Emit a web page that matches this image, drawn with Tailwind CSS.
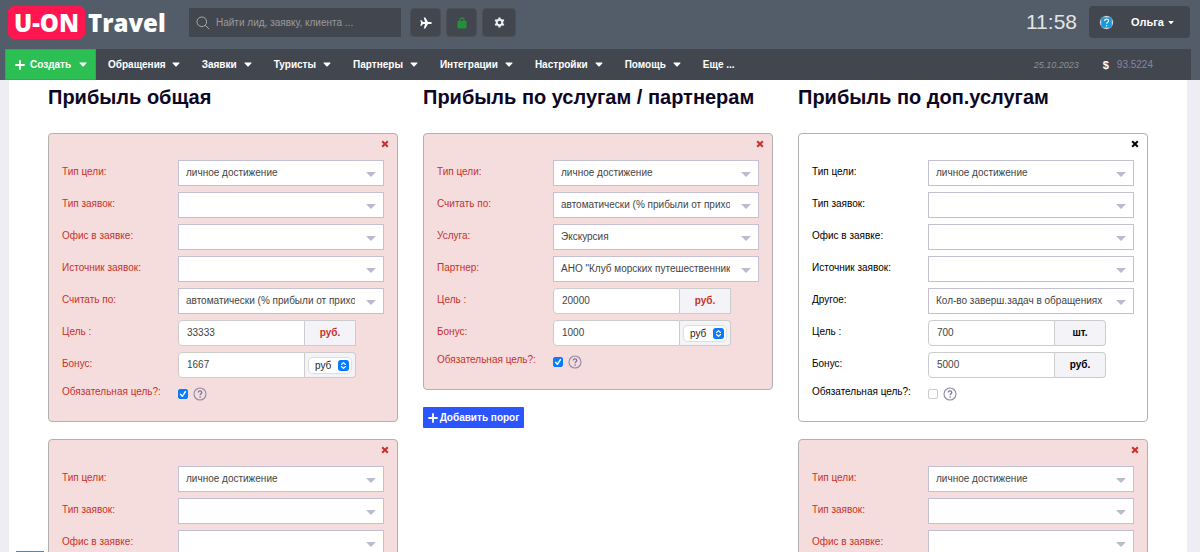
<!DOCTYPE html>
<html lang="ru">
<head>
<meta charset="utf-8">
<meta name="viewport" content="width=device-width, initial-scale=1">
<title>U-ON Travel</title>
<script src="https://cdn.jsdelivr.net/npm/@tailwindcss/browser@4"></script>
</head>
<body class="relative flex h-screen flex-col overflow-hidden bg-[#ededf3] font-['Liberation_Sans',Arial,sans-serif] text-[10px] leading-4 text-black">
<svg class="hidden" aria-hidden="true">
  <symbol id="caret" viewBox="0 0 8 5"><path d="M.9.5h6.2c.4 0 .6.4.3.7L4.4 4.4a.6.6 0 0 1-.8 0L.6 1.2C.3.9.5.5.9.5z" fill="currentColor"/></symbol>
  <symbol id="tri" viewBox="0 0 10 5"><path d="M0 0h10L5 5z" fill="#bdbacd"/></symbol>
  <symbol id="plus" viewBox="0 0 10 10"><path d="M5 1v8M1 5h8" stroke="currentColor" stroke-width="1.8" stroke-linecap="round"/></symbol>
  <symbol id="cross" viewBox="0 0 8 8"><path d="M1.2 1.2l5.6 5.6M6.8 1.2L1.2 6.8" stroke="currentColor" stroke-width="2"/></symbol>
  <symbol id="help" viewBox="0 0 14 14"><circle cx="7" cy="7" r="6" fill="none" stroke="#8f88ab" stroke-width="1.1"/><path d="M5.2 5.6c0-2.3 3.6-2.3 3.6 0 0 1.2-1.7 1.3-1.7 2.6" fill="none" stroke="#7d7799" stroke-width="1.3"/><circle cx="7.1" cy="10.1" r=".8" fill="#7d7799"/></symbol>
  <symbol id="updown" viewBox="0 0 10 10"><rect width="10" height="10" rx="2.4" fill="#0a7aff"/><path d="M3.2 4.1L5 2.4l1.8 1.7M3.2 5.9L5 7.6l1.8-1.7" fill="none" stroke="#fff" stroke-width="1" stroke-linecap="round" stroke-linejoin="round"/></symbol>
  <symbol id="tick" viewBox="0 0 10 10"><path d="M2.5 5.3l1.8 2 3.2-4.8" fill="none" stroke="#fff" stroke-width="1.4" stroke-linecap="round" stroke-linejoin="round"/></symbol>
</svg>

<header class="shrink-0 bg-[#525d69] text-white">
  <div class="flex h-[49px] items-start pr-[10px] pl-2">
    <a href="#" class="mt-[6px] flex w-[181px] items-center gap-[3px] font-['Open_Sans',sans-serif] text-[24px] leading-8 font-extrabold">
      <span class="flex h-[33px] w-[77px] items-center justify-center rounded-md bg-[#ff1650]">U-ON</span><span>Travel</span>
    </a>
    <label class="mt-2 flex h-[29px] w-[212px] items-center gap-[6px] bg-[#42474f] pl-[7px]">
      <svg class="size-[14px] shrink-0" viewBox="0 0 14 14" fill="none" stroke="#a5a8ac" stroke-width="1"><circle cx="5.8" cy="5.8" r="4.8"/><path d="M9.2 9.2l4 4"/></svg>
      <input type="text" aria-label="Поиск" placeholder="Найти лид, заявку, клиента ..." class="w-full min-w-0 bg-transparent text-[10px] outline-none placeholder:text-[#9a9a9c]">
    </label>
    <div class="mt-2 ml-[9px] flex gap-[5px]">
      <button aria-label="Авиабилеты" class="grid h-[29px] w-[31px] place-items-center rounded-sm border border-[#4d4f52] bg-[#42474f]"><svg class="size-3" viewBox="0 0 12 12" fill="#fff"><path d="M.3 3.2h1.3L3 4.9h2L3.8.6h1.5L8 4.900h2.100c1 0 1.800.6 1.800 1.100S11.100 7.100 10.100 7.100H8l-2.700 4.300H3.800L5 7.100H3L1.600 8.800H.3L1.100 6z"/></svg></button>
      <button aria-label="Покупки" class="grid h-[29px] w-[31px] place-items-center rounded-sm border border-[#4d4f52] bg-[#42474f]"><svg class="h-3 w-[10px]" viewBox="0 0 10 12"><path d="M.5 4h9v6.200A1.300 1.300 0 0 1 8.200 11.500H1.800A1.300 1.300 0 0 1 .5 10.200z" fill="#23903c"/><path d="M3 5.500V3a2 2 0 0 1 4 0v2.500" fill="none" stroke="#23903c" stroke-width="1.300"/></svg></button>
      <button aria-label="Параметры" class="grid h-[29px] w-[34px] place-items-center rounded-sm border border-[#4d4f52] bg-[#42474f]"><svg class="size-[11px]" viewBox="0 0 12 12" fill="none" stroke="#eceef0"><circle cx="6" cy="6" r="3" stroke-width="2"/><path d="M6 .6v2M6 9.400v2M1.300 3.300l1.800 1M8.900 7.700l1.800 1M1.300 8.700l1.800-1M8.900 4.300l1.800-1" stroke-width="2.400"/></svg></button>
    </div>
    <div class="mt-[6px] ml-auto text-[21px] leading-8 text-[#e4e4e4]">11:58</div>
    <div class="mt-[6px] ml-3 flex h-8 w-[101px] items-center gap-[17px] rounded-sm bg-[#42474f] pl-[10px]">
      <a href="#" aria-label="Справка"><svg class="size-[15px]" viewBox="0 0 15 15"><circle cx="7.500" cy="7.500" r="7" fill="#d5e6f0" stroke="#33383e" stroke-width=".8"/><rect x="2.200" y="2.200" width="10.600" height="10.600" rx="1.500" fill="#1c97d8"/><path d="M5.600 6c0-2.700 3.900-2.500 3.900-.1 0 1.300-1.900 1.300-1.900 2.800" fill="none" stroke="#fff" stroke-width="1.100"/><circle cx="7.600" cy="10.700" r=".7" fill="#fff"/></svg></a>
      <button class="flex items-center gap-1 text-[11px] font-bold">Ольга <svg class="h-[5px] w-[6px]"><use href="#caret"/></svg></button>
    </div>
  </div>
  <nav class="mr-[9px] ml-[5px] flex h-[31px] items-center bg-[#42474f] font-bold">
    <button class="flex h-full w-[91px] items-center border border-[#22b14c] bg-[#2bbf54] pl-[9px]"><svg class="mr-[5px] size-[10px]"><use href="#plus"/></svg>Создать<svg class="ml-2 h-[5px] w-2"><use href="#caret"/></svg></button>
    <div class="ml-3 flex items-center gap-[22px]">
      <button class="flex items-center gap-[6px]">Обращения<svg class="h-[5px] w-2"><use href="#caret"/></svg></button>
      <button class="flex items-center gap-[7px]">Заявки<svg class="h-[5px] w-2"><use href="#caret"/></svg></button>
      <button class="flex items-center gap-[7px]">Туристы<svg class="h-[5px] w-2"><use href="#caret"/></svg></button>
      <button class="flex items-center gap-[7px]">Партнеры<svg class="h-[5px] w-2"><use href="#caret"/></svg></button>
      <button class="flex items-center gap-[7px]">Интеграции<svg class="h-[5px] w-2"><use href="#caret"/></svg></button>
      <button class="flex items-center gap-[7px]">Настройки<svg class="h-[5px] w-2"><use href="#caret"/></svg></button>
      <button class="flex items-center gap-[7px]">Помощь<svg class="h-[5px] w-2"><use href="#caret"/></svg></button>
      <button>Еще ...</button>
    </div>
    <div class="ml-auto flex items-center pr-[38px] text-[9px] font-normal">
      <span class="mr-6 text-[#8f8f92] italic">25.10.2023</span>
      <span class="mr-2 text-[11px] font-bold">$</span>
      <span class="text-[10px] text-[#8b84a0]">93.5224</span>
    </div>
  </nav>
</header>

<main class="mr-[13px] ml-[9px] grid min-h-0 flex-1 grid-cols-3 content-start gap-x-[25px] bg-white px-[39px]">

  <section>
    <h2 class="mt-[3px] mb-[22px] text-[20px] leading-7 font-bold whitespace-nowrap text-[#0d0725]">Прибыль общая</h2>
    <div class="flex flex-col gap-[17px]">
      <form class="rounded-sm border border-[#b3b0b0] bg-[#f5dddd] px-[13px] pb-[17px] text-[#c9302c]">
        <div class="-mr-[5px] flex h-[26px] items-start justify-end pt-[6px]"><button type="button" aria-label="Удалить"><svg class="size-2"><use href="#cross"/></svg></button></div>
        <div class="grid grid-cols-[116px_1fr] gap-y-[6px]">
          <label for="a1" class="pt-1">Тип цели:</label>
          <div class="relative"><select id="a1" class="block h-[26px] w-full appearance-none border border-[#c3c0d3] bg-white pr-7 pl-[7px] text-[#444]"><option>личное достижение</option></select><svg class="pointer-events-none absolute top-3 right-2 h-[5px] w-[10px]"><use href="#tri"/></svg></div>
          <label for="a2" class="pt-1">Тип заявок:</label>
          <div class="relative"><select id="a2" class="block h-[26px] w-full appearance-none border border-[#c3c0d3] bg-white pr-7 pl-[7px] text-[#444]"><option></option></select><svg class="pointer-events-none absolute top-3 right-2 h-[5px] w-[10px]"><use href="#tri"/></svg></div>
          <label for="a3" class="pt-1">Офис в заявке:</label>
          <div class="relative"><select id="a3" class="block h-[26px] w-full appearance-none border border-[#c3c0d3] bg-white pr-7 pl-[7px] text-[#444]"><option></option></select><svg class="pointer-events-none absolute top-3 right-2 h-[5px] w-[10px]"><use href="#tri"/></svg></div>
          <label for="a4" class="pt-1">Источник заявок:</label>
          <div class="relative"><select id="a4" class="block h-[26px] w-full appearance-none border border-[#c3c0d3] bg-white pr-7 pl-[7px] text-[#444]"><option></option></select><svg class="pointer-events-none absolute top-3 right-2 h-[5px] w-[10px]"><use href="#tri"/></svg></div>
          <label for="a5" class="pt-1">Считать по:</label>
          <div class="relative"><select id="a5" class="block h-[26px] w-full appearance-none border border-[#c3c0d3] bg-white pr-7 pl-[7px] text-[#444]"><option>автоматически (% прибыли от прихода)</option></select><svg class="pointer-events-none absolute top-3 right-2 h-[5px] w-[10px]"><use href="#tri"/></svg></div>
          <label for="a6" class="pt-1">Цель :</label>
          <div class="flex h-[26px]"><input id="a6" type="text" value="33333" class="w-[127px] rounded-l-sm border border-[#ccc] bg-white px-2 text-[#444]"><span class="grid w-[51px] place-items-center border border-l-0 border-[#ccc] bg-[#f4f4f8] font-bold">руб.</span></div>
          <label for="a7" class="pt-1">Бонус:</label>
          <div class="flex h-[26px]"><input id="a7" type="text" value="1667" class="w-[127px] rounded-l-sm border border-[#ccc] bg-white px-2 text-[#444]"><span class="grid w-[51px] place-items-center rounded-r-sm border border-l-0 border-[#ccc] bg-[#f4f4f8]"><span class="relative"><select aria-label="Валюта бонуса" class="block h-[15px] w-[42px] appearance-none rounded-[4px] bg-white pl-[6px] text-[10px] leading-[15px] text-[#222] shadow-[0_0_1px_1px_#00000018]"><option>руб</option></select><svg class="pointer-events-none absolute top-[2px] right-[2px] size-[11px]"><use href="#updown"/></svg></span></span></div>
        </div>
        <div class="grid grid-cols-[116px_1fr] pt-[6px]">
          <label for="a8">Обязательная цель?:</label>
          <div class="flex h-5 items-center gap-[5px]"><span class="relative size-[10px]"><input id="a8" type="checkbox" checked class="block size-[10px] appearance-none rounded-[2px] border border-[#ccc] bg-white checked:border-[#0a7aff] checked:bg-[#0a7aff]"><svg class="pointer-events-none absolute inset-0 size-[10px]"><use href="#tick"/></svg></span><button type="button" aria-label="Подсказка"><svg class="size-[14px]"><use href="#help"/></svg></button></div>
        </div>
      </form>
      <form class="rounded-sm border border-[#b3b0b0] bg-[#f5dddd] px-[13px] pb-[17px] text-[#c9302c]">
        <div class="-mr-[5px] flex h-[26px] items-start justify-end pt-[6px]"><button type="button" aria-label="Удалить"><svg class="size-2"><use href="#cross"/></svg></button></div>
        <div class="grid grid-cols-[116px_1fr] gap-y-[6px]">
          <label for="b1" class="pt-1">Тип цели:</label>
          <div class="relative"><select id="b1" class="block h-[26px] w-full appearance-none border border-[#c3c0d3] bg-white pr-7 pl-[7px] text-[#444]"><option>личное достижение</option></select><svg class="pointer-events-none absolute top-3 right-2 h-[5px] w-[10px]"><use href="#tri"/></svg></div>
          <label for="b2" class="pt-1">Тип заявок:</label>
          <div class="relative"><select id="b2" class="block h-[26px] w-full appearance-none border border-[#c3c0d3] bg-white pr-7 pl-[7px] text-[#444]"><option></option></select><svg class="pointer-events-none absolute top-3 right-2 h-[5px] w-[10px]"><use href="#tri"/></svg></div>
          <label for="b3" class="pt-1">Офис в заявке:</label>
          <div class="relative"><select id="b3" class="block h-[26px] w-full appearance-none border border-[#c3c0d3] bg-white pr-7 pl-[7px] text-[#444]"><option></option></select><svg class="pointer-events-none absolute top-3 right-2 h-[5px] w-[10px]"><use href="#tri"/></svg></div>
        </div>
      </form>
    </div>
  </section>

  <section>
    <h2 class="mt-[3px] mb-[22px] text-[20px] leading-7 font-bold whitespace-nowrap text-[#0d0725]">Прибыль по услугам / партнерам</h2>
    <div class="flex flex-col items-stretch gap-[17px]">
      <form class="rounded-sm border border-[#b3b0b0] bg-[#f5dddd] px-[13px] pb-[17px] text-[#c9302c]">
        <div class="-mr-[5px] flex h-[26px] items-start justify-end pt-[6px]"><button type="button" aria-label="Удалить"><svg class="size-2"><use href="#cross"/></svg></button></div>
        <div class="grid grid-cols-[116px_1fr] gap-y-[6px]">
          <label for="c1" class="pt-1">Тип цели:</label>
          <div class="relative"><select id="c1" class="block h-[26px] w-full appearance-none border border-[#c3c0d3] bg-white pr-7 pl-[7px] text-[#444]"><option>личное достижение</option></select><svg class="pointer-events-none absolute top-3 right-2 h-[5px] w-[10px]"><use href="#tri"/></svg></div>
          <label for="c2" class="pt-1">Считать по:</label>
          <div class="relative"><select id="c2" class="block h-[26px] w-full appearance-none border border-[#c3c0d3] bg-white pr-7 pl-[7px] text-[#444]"><option>автоматически (% прибыли от прихода)</option></select><svg class="pointer-events-none absolute top-3 right-2 h-[5px] w-[10px]"><use href="#tri"/></svg></div>
          <label for="c3" class="pt-1">Услуга:</label>
          <div class="relative"><select id="c3" class="block h-[26px] w-full appearance-none border border-[#c3c0d3] bg-white pr-7 pl-[7px] text-[#444]"><option>Экскурсия</option></select><svg class="pointer-events-none absolute top-3 right-2 h-[5px] w-[10px]"><use href="#tri"/></svg></div>
          <label for="c4" class="pt-1">Партнер:</label>
          <div class="relative"><select id="c4" class="block h-[26px] w-full appearance-none border border-[#c3c0d3] bg-white pr-7 pl-[7px] text-[#444]"><option>АНО "Клуб морских путешественников"</option></select><svg class="pointer-events-none absolute top-3 right-2 h-[5px] w-[10px]"><use href="#tri"/></svg></div>
          <label for="c5" class="pt-1">Цель :</label>
          <div class="flex h-[26px]"><input id="c5" type="text" value="20000" class="w-[127px] rounded-l-sm border border-[#ccc] bg-white px-2 text-[#444]"><span class="grid w-[51px] place-items-center border border-l-0 border-[#ccc] bg-[#f4f4f8] font-bold">руб.</span></div>
          <label for="c6" class="pt-1">Бонус:</label>
          <div class="flex h-[26px]"><input id="c6" type="text" value="1000" class="w-[127px] rounded-l-sm border border-[#ccc] bg-white px-2 text-[#444]"><span class="grid w-[51px] place-items-center rounded-r-sm border border-l-0 border-[#ccc] bg-[#f4f4f8]"><span class="relative"><select aria-label="Валюта бонуса" class="block h-[15px] w-[42px] appearance-none rounded-[4px] bg-white pl-[6px] text-[10px] leading-[15px] text-[#222] shadow-[0_0_1px_1px_#00000018]"><option>руб</option></select><svg class="pointer-events-none absolute top-[2px] right-[2px] size-[11px]"><use href="#updown"/></svg></span></span></div>
        </div>
        <div class="grid grid-cols-[116px_1fr] pt-[6px]">
          <label for="c7">Обязательная цель?:</label>
          <div class="flex h-5 items-center gap-[5px]"><span class="relative size-[10px]"><input id="c7" type="checkbox" checked class="block size-[10px] appearance-none rounded-[2px] border border-[#ccc] bg-white checked:border-[#0a7aff] checked:bg-[#0a7aff]"><svg class="pointer-events-none absolute inset-0 size-[10px]"><use href="#tick"/></svg></span><button type="button" aria-label="Подсказка"><svg class="size-[14px]"><use href="#help"/></svg></button></div>
        </div>
      </form>
      <button class="flex h-[21px] w-[101px] items-center justify-center gap-[2px] self-start rounded-[1px] bg-[#2a55ff] font-bold whitespace-nowrap text-white"><svg class="size-[10px] shrink-0"><use href="#plus"/></svg>Добавить порог</button>
    </div>
  </section>

  <section>
    <h2 class="mt-[3px] mb-[22px] text-[20px] leading-7 font-bold whitespace-nowrap text-[#0d0725]">Прибыль по доп.услугам</h2>
    <div class="flex flex-col gap-[17px]">
      <form class="rounded-sm border border-[#b3b0b0] bg-white px-[13px] pb-[17px] text-black">
        <div class="-mr-[5px] flex h-[26px] items-start justify-end pt-[6px]"><button type="button" aria-label="Удалить"><svg class="size-2"><use href="#cross"/></svg></button></div>
        <div class="grid grid-cols-[116px_1fr] gap-y-[6px]">
          <label for="d1" class="pt-1">Тип цели:</label>
          <div class="relative"><select id="d1" class="block h-[26px] w-full appearance-none border border-[#c3c0d3] bg-white pr-7 pl-[7px] text-[#444]"><option>личное достижение</option></select><svg class="pointer-events-none absolute top-3 right-2 h-[5px] w-[10px]"><use href="#tri"/></svg></div>
          <label for="d2" class="pt-1">Тип заявок:</label>
          <div class="relative"><select id="d2" class="block h-[26px] w-full appearance-none border border-[#c3c0d3] bg-white pr-7 pl-[7px] text-[#444]"><option></option></select><svg class="pointer-events-none absolute top-3 right-2 h-[5px] w-[10px]"><use href="#tri"/></svg></div>
          <label for="d3" class="pt-1">Офис в заявке:</label>
          <div class="relative"><select id="d3" class="block h-[26px] w-full appearance-none border border-[#c3c0d3] bg-white pr-7 pl-[7px] text-[#444]"><option></option></select><svg class="pointer-events-none absolute top-3 right-2 h-[5px] w-[10px]"><use href="#tri"/></svg></div>
          <label for="d4" class="pt-1">Источник заявок:</label>
          <div class="relative"><select id="d4" class="block h-[26px] w-full appearance-none border border-[#c3c0d3] bg-white pr-7 pl-[7px] text-[#444]"><option></option></select><svg class="pointer-events-none absolute top-3 right-2 h-[5px] w-[10px]"><use href="#tri"/></svg></div>
          <label for="d5" class="pt-1">Другое:</label>
          <div class="relative"><select id="d5" class="block h-[26px] w-full appearance-none border border-[#c3c0d3] bg-white pr-7 pl-[7px] text-[#444]"><option>Кол-во заверш.задач в обращениях</option></select><svg class="pointer-events-none absolute top-3 right-2 h-[5px] w-[10px]"><use href="#tri"/></svg></div>
          <label for="d6" class="pt-1">Цель :</label>
          <div class="flex h-[26px]"><input id="d6" type="text" value="700" class="w-[127px] rounded-l-sm border border-[#ccc] bg-white px-2 text-[#444]"><span class="grid w-[51px] place-items-center rounded-r-sm border border-l-0 border-[#ccc] bg-[#f4f4f8] font-bold">шт.</span></div>
          <label for="d7" class="pt-1">Бонус:</label>
          <div class="flex h-[26px]"><input id="d7" type="text" value="5000" class="w-[127px] rounded-l-sm border border-[#ccc] bg-white px-2 text-[#444]"><span class="grid w-[51px] place-items-center rounded-r-sm border border-l-0 border-[#ccc] bg-[#f4f4f8] font-bold">руб.</span></div>
        </div>
        <div class="grid grid-cols-[116px_1fr] pt-[6px]">
          <label for="d8">Обязательная цель?:</label>
          <div class="flex h-5 items-center gap-[5px]"><input id="d8" type="checkbox" class="block size-[10px] appearance-none rounded-[2px] border border-[#ccc] bg-white"><button type="button" aria-label="Подсказка"><svg class="size-[14px]"><use href="#help"/></svg></button></div>
        </div>
      </form>
      <form class="rounded-sm border border-[#b3b0b0] bg-[#f5dddd] px-[13px] pb-[17px] text-[#c9302c]">
        <div class="-mr-[5px] flex h-[26px] items-start justify-end pt-[6px]"><button type="button" aria-label="Удалить"><svg class="size-2"><use href="#cross"/></svg></button></div>
        <div class="grid grid-cols-[116px_1fr] gap-y-[6px]">
          <label for="e1" class="pt-1">Тип цели:</label>
          <div class="relative"><select id="e1" class="block h-[26px] w-full appearance-none border border-[#c3c0d3] bg-white pr-7 pl-[7px] text-[#444]"><option>личное достижение</option></select><svg class="pointer-events-none absolute top-3 right-2 h-[5px] w-[10px]"><use href="#tri"/></svg></div>
          <label for="e2" class="pt-1">Тип заявок:</label>
          <div class="relative"><select id="e2" class="block h-[26px] w-full appearance-none border border-[#c3c0d3] bg-white pr-7 pl-[7px] text-[#444]"><option></option></select><svg class="pointer-events-none absolute top-3 right-2 h-[5px] w-[10px]"><use href="#tri"/></svg></div>
          <label for="e3" class="pt-1">Офис в заявке:</label>
          <div class="relative"><select id="e3" class="block h-[26px] w-full appearance-none border border-[#c3c0d3] bg-white pr-7 pl-[7px] text-[#444]"><option></option></select><svg class="pointer-events-none absolute top-3 right-2 h-[5px] w-[10px]"><use href="#tri"/></svg></div>
        </div>
      </form>
    </div>
  </section>
</main>
<div class="absolute bottom-0 left-4 h-px w-7 bg-[#3c8dcf]"></div>
</body>
</html>
